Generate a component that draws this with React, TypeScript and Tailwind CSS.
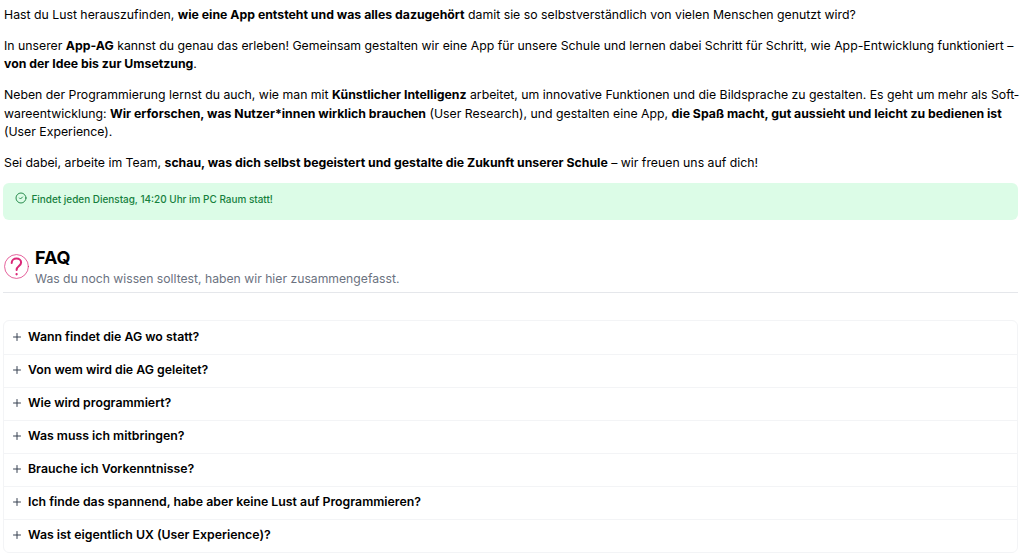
import { Plus, CircleCheck } from "lucide-react";

const faqs = [
  "Wann findet die AG wo statt?",
  "Von wem wird die AG geleitet?",
  "Wie wird programmiert?",
  "Was muss ich mitbringen?",
  "Brauche ich Vorkenntnisse?",
  "Ich finde das spannend, habe aber keine Lust auf Programmieren?",
  "Was ist eigentlich UX (User Experience)?",
];

export default function App() {
  return (
    <div className="h-[553px] w-[1024px] overflow-hidden bg-white pl-[3px] pr-[6px] font-['Inter',sans-serif] text-[12.32px] leading-[18.48px] text-black">
      <div className="-mr-[2px] flex flex-col gap-[12.32px] pl-[1px] pt-[6px] text-[12.29px]">
        <p>Hast du Lust herauszufinden, <b className="font-bold">wie eine App entsteht und was alles dazugehört</b> damit sie so selbstverständlich von vielen Menschen genutzt wird?</p>
        <p>In unserer <b className="font-bold">App-AG</b> kannst du genau das erleben! Gemeinsam gestalten wir eine App für unsere Schule und lernen dabei Schritt für Schritt, wie App-Entwicklung funktioniert – <b className="font-bold">von der Idee bis zur Umsetzung</b>.</p>
        <p className="hyphens-manual">Neben der Programmierung lernst du auch, wie man mit <b className="font-bold">Künstlicher Intelligenz</b> arbeitet, um innovative Funktionen und die Bildsprache zu gestalten. Es geht um mehr als Soft&shy;wareentwicklung: <b className="font-bold">Wir erforschen, was Nutzer*innen wirklich brauchen</b> (User Research), und gestalten eine App, <b className="font-bold">die Spaß macht, gut aussieht und leicht zu bedienen ist</b> (User Experience).</p>
        <p>Sei dabei, arbeite im Team, <b className="font-bold">schau, was dich selbst begeistert und gestalte die Zukunft unserer Schule</b> – wir freuen uns auf dich!</p>
      </div>
      <div className="mt-[11px] flex h-[37px] items-start gap-[5px] rounded-[6px] bg-[#dcfce7] pl-[11.5px] pr-[11px] pt-[7px] text-[9.95px] font-medium leading-[18px] text-[#15803d]">
        <CircleCheck className="mt-[2px] h-[12px] w-[12px]" strokeWidth={1.8} />
        <span>Findet jeden Dienstag, 14:20 Uhr im PC Raum statt!</span>
      </div>
      <div className="mt-[26px] flex items-start gap-[5px] border-b border-[#e5e7eb] pb-[5px]">
        <svg viewBox="0 0 26 26" className="ml-[1px] mt-[8px] h-[25px] w-[25px]" fill="none" stroke="#db2777" strokeLinecap="round">
          <circle cx="13" cy="13" r="12.4" strokeWidth="1" strokeOpacity="0.75" />
          <path d="M8 9.4c0-3 2.3-4.6 5-4.6 2.8 0 4.8 1.7 4.8 4.1 0 3.6-4.7 3.7-4.7 7.7" strokeWidth="2.1" />
          <path d="M13.1 21v.1" strokeWidth="2.4" />
        </svg>
        <div className="ml-[1px]">
          <div className="text-[18px] font-bold leading-[24px]">FAQ</div>
          <div className="pt-[1px] text-[12.2px] leading-[16px] text-[#6b7280]">Was du noch wissen solltest, haben wir hier zusammengefasst.</div>
        </div>
      </div>
      <div className="mt-[27px] rounded-[6px] border border-[#f3f4f6]">
        {faqs.map((q, i) => (
          <div key={q} className={`flex h-[33px] items-center gap-[5px] px-[7px] pb-[2px] font-semibold ${i ? "border-t border-[#f3f4f6]" : ""}`}>
            <Plus className="h-[12px] w-[12px] text-[#374151]" strokeWidth={2} />
            <span>{q}</span>
          </div>
        ))}
      </div>
    </div>
  );
}
